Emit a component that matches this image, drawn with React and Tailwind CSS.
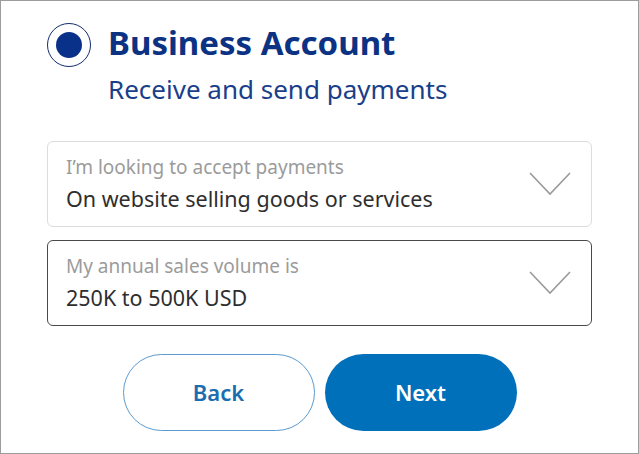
function SelectBox({ label, value, active }) {
  return (
    <div
      className={
        'ml-[46px] flex h-[86px] w-[545px] items-center justify-between rounded-[6px] border bg-white pl-[18px] pr-[20px] ' +
        (active ? 'border-[#4a4a4a]' : 'border-[#dcdcdc]')
      }
    >
      <div className="flex flex-col">
        <span className="text-[19px] leading-[24px] text-[#9b9b9b]">{label}</span>
        <span className="mt-[6px] text-[21.5px] leading-[28px] text-[#2e2e2e]">{value}</span>
      </div>
      <svg width="42" height="24" viewBox="0 0 42 24" fill="none" className="shrink-0">
        <polyline points="1,1 21,22 41,1" stroke="#9a9a9a" strokeWidth="1.6" />
      </svg>
    </div>
  )
}

export default function App() {
  return (
    <div
      className="h-[454px] w-[639px] border border-[#9c9c9c] bg-white"
      style={{ fontFamily: '"Noto Sans", "Open Sans", sans-serif' }}
    >
      {/* radio + heading */}
      <div className="flex gap-[17px] pl-[46px] pt-[20px]">
        <div className="mt-[2px] flex h-[44px] w-[44px] shrink-0 items-center justify-center rounded-full border-[1.5px] border-[#132d6b]">
          <div className="h-[26px] w-[26px] rounded-full bg-[#0a3189]" />
        </div>
        <div className="flex flex-col">
          <h1 className="text-[33px] font-bold leading-[44px] text-[#0b3283]">Business Account</h1>
          <p className="mt-[8px] text-[26px] leading-[32px] text-[#1a3f8a]">Receive and send payments</p>
        </div>
      </div>

      <div className="mt-[36px] flex flex-col gap-[13px]">
        <SelectBox label="I’m looking to accept payments" value="On website selling goods or services" />
        <SelectBox label="My annual sales volume is" value="250K to 500K USD" active />
      </div>

      <div className="mt-[28px] flex justify-center gap-[10px]">
        <button className="h-[77px] w-[192px] rounded-full border-[1.5px] border-[#5c9bcf] bg-white text-[22px] font-semibold text-[#1a6daf]">
          Back
        </button>
        <button className="h-[77px] w-[192px] rounded-full bg-[#0070ba] text-[22px] font-semibold text-white">
          Next
        </button>
      </div>
    </div>
  )
}
